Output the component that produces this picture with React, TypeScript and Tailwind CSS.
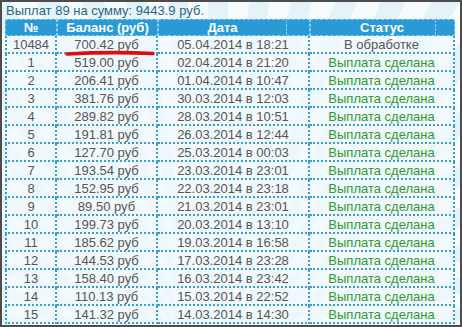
import React from 'react';

interface Payout {
  id: string;
  amount: string;
  date: string;
  status: string;
  done: boolean;
}

const rows: Payout[] = [
  { id: '10484', amount: '700.42', date: '05.04.2014 в 18:21', status: 'В обработке', done: false },
  { id: '1', amount: '519.00', date: '02.04.2014 в 21:20', status: 'Выплата сделана', done: true },
  { id: '2', amount: '206.41', date: '01.04.2014 в 10:47', status: 'Выплата сделана', done: true },
  { id: '3', amount: '381.76', date: '30.03.2014 в 12:03', status: 'Выплата сделана', done: true },
  { id: '4', amount: '289.82', date: '28.03.2014 в 10:51', status: 'Выплата сделана', done: true },
  { id: '5', amount: '191.81', date: '26.03.2014 в 12:44', status: 'Выплата сделана', done: true },
  { id: '6', amount: '127.70', date: '25.03.2014 в 00:03', status: 'Выплата сделана', done: true },
  { id: '7', amount: '193.54', date: '23.03.2014 в 23:01', status: 'Выплата сделана', done: true },
  { id: '8', amount: '152.95', date: '22.03.2014 в 23:18', status: 'Выплата сделана', done: true },
  { id: '9', amount: '89.50', date: '21.03.2014 в 23:01', status: 'Выплата сделана', done: true },
  { id: '10', amount: '199.73', date: '20.03.2014 в 13:10', status: 'Выплата сделана', done: true },
  { id: '11', amount: '185.62', date: '19.03.2014 в 16:58', status: 'Выплата сделана', done: true },
  { id: '12', amount: '144.53', date: '17.03.2014 в 23:28', status: 'Выплата сделана', done: true },
  { id: '13', amount: '158.40', date: '16.03.2014 в 23:42', status: 'Выплата сделана', done: true },
  { id: '14', amount: '110.13', date: '15.03.2014 в 22:52', status: 'Выплата сделана', done: true },
  { id: '15', amount: '141.32', date: '14.03.2014 в 14:30', status: 'Выплата сделана', done: true },
];

const cell = 'h-[18px] flex items-center justify-center border-b-2 border-r-2 border-dotted border-[#3a9fcc] leading-none';

const App: React.FC = () => {
  return (
    <div
      className="w-[462px] h-[327px] overflow-hidden border-2 border-[#4d4d4d] pl-[3px] text-[13px] bg-[repeating-conic-gradient(from_0deg_at_45%_120%,#e4f3f9_0deg_3deg,#f6fbfd_3deg_6deg)]"
      style={{ fontFamily: '"Liberation Sans", Arial, sans-serif' }}
    >
      <div className="h-[17px] pl-[1px] pt-[1px] leading-[16px] text-[#2a6585]">
        Выплат 89 на сумму: 9443.9 руб.
      </div>

      <div className="grid w-[450px] grid-cols-[52px_101px_152px_145px] bg-[#f2fafd]/70">
        <div className="h-[17px] flex items-center justify-center bg-[#2a9ad6] font-bold text-white border border-dashed border-[#8ccff0]">
          №
        </div>
        <div className="h-[17px] flex items-center justify-center bg-[#2a9ad6] font-bold text-white border border-dashed border-[#8ccff0]">
          Баланс (руб)
        </div>
        <div className="h-[17px] flex bg-[#2a9ad6] font-bold text-white border border-dashed border-[#8ccff0]">
          <div className="flex-1 flex items-center justify-center border-r border-dashed border-[#8ccff0]">Дата</div>
          <div className="w-[22px]" />
        </div>
        <div className="h-[17px] flex bg-[#2a9ad6] font-bold text-white border border-dashed border-[#8ccff0]">
          <div className="flex-1 flex items-center justify-center border-r border-dashed border-[#8ccff0] pl-[18px]">Статус</div>
          <div className="w-[18px]" />
        </div>

        {rows.map((r, i) => (
          <React.Fragment key={r.id}>
            <div className={`${cell} border-l-2 text-[#555]`}>{r.id}</div>
            <div className={`${cell} relative text-[#555]`}>
              {r.amount} руб
              {i === 0 && (
                <svg className="absolute left-[8px] top-[14px]" width="90" height="7" viewBox="0 0 90 7">
                  <path d="M2 4 Q 45 1.5 88 3.5" stroke="#e00b0b" strokeWidth="3.6" strokeLinecap="round" fill="none" />
                </svg>
              )}
            </div>
            <div className={`${cell} text-[#555]`}>{r.date}</div>
            <div className={`${cell} ${r.done ? 'text-[#2f9a2f]' : 'text-[#555]'}`}>{r.status}</div>
          </React.Fragment>
        ))}
      </div>
    </div>
  );
};

export default App;
